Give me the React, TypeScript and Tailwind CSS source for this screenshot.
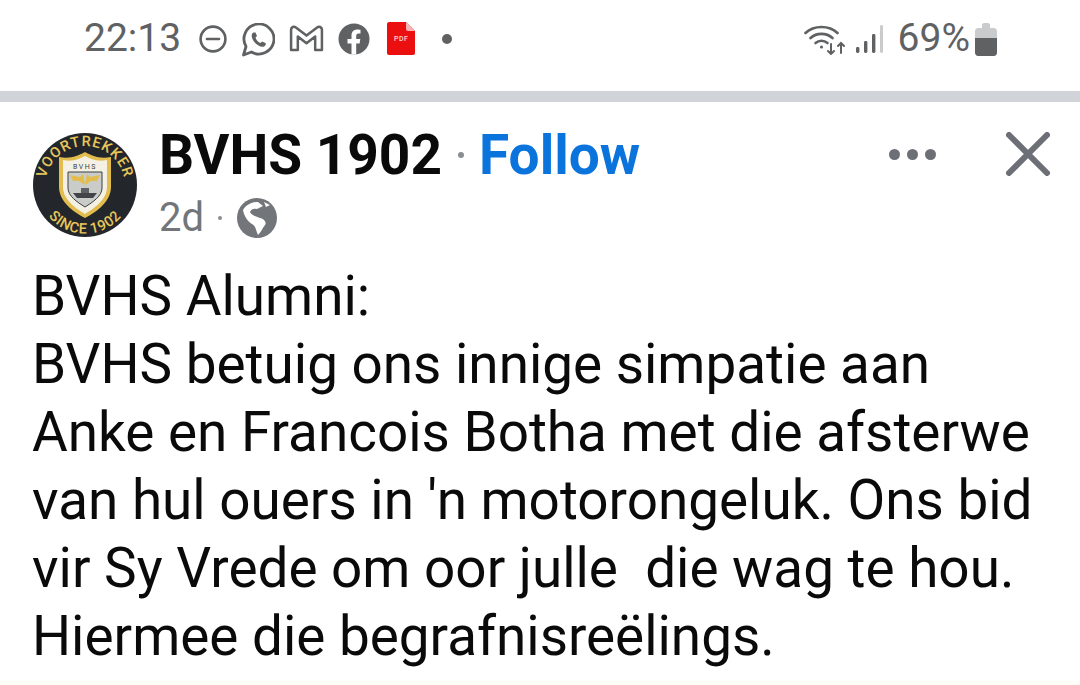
import React from 'react';

function Logo() {
  return (
    <svg viewBox="0 0 104 104" className="w-[104px] h-[104px] shrink-0">
      <defs>
        <path id="arcTop" d="M 13 62 A 40 40 0 1 1 91 62" />
        <path id="arcBottom" d="M 5 60 A 47.5 47.5 0 0 0 99 60" />
      </defs>
      <circle cx="52" cy="52" r="52" fill="#23262a" />
      <text fontFamily="Roboto, sans-serif" fontSize="14.5" fontWeight="500" fill="#e8c65a" letterSpacing="0.9">
        <textPath href="#arcTop" startOffset="50%" textAnchor="middle">VOORTREKKER</textPath>
      </text>
      <text fontFamily="Roboto, sans-serif" fontSize="14.5" fontWeight="500" fill="#e8c65a" letterSpacing="0.6">
        <textPath href="#arcBottom" startOffset="50%" textAnchor="middle">SINCE 1902</textPath>
      </text>
      <path d="M26 24 C38 26 44 23 52 19 C60 23 66 26 78 24 L78 54 C78 68 64 79 52 85 C40 79 26 68 26 54 Z" fill="#e2bd4e" />
      <path d="M30 27 C40 29 46 26 52 23 C58 26 64 29 74 27 L74 54 C74 66 62 75 52 81 C42 75 30 66 30 54 Z" fill="#f4f1e4" />
      <path d="M35 39 L69 39 L69 55 C69 63 60 69 52 74 C44 69 35 63 35 55 Z" fill="#c9ccc9" stroke="#3b3f44" strokeWidth="1" />
      <path d="M37 42 L47 44 L50 41 L52 52 L46 48 L40 48 Z" fill="#e2bd4e" />
      <path d="M67 42 L57 44 L54 41 L52 52 L58 48 L64 48 Z" fill="#e2bd4e" />
      <path d="M40 60 L64 60 L60 65 L44 65 Z" fill="#41454a" />
      <rect x="48" y="55" width="8" height="5" fill="#5d6166" />
      <text x="52" y="36" textAnchor="middle" fontFamily="Roboto, sans-serif" fontSize="7" fill="#3b3f44" letterSpacing="1.5">BVHS</text>
    </svg>
  );
}

function StatusIcons() {
  return (
    <div className="flex items-center">
      {/* dnd */}
      <svg viewBox="0 0 28 28" className="w-[28px] h-[28px] ml-[18px]" fill="none" stroke="#5f6163" strokeWidth="2.6">
        <circle cx="14" cy="14" r="12.4" />
        <path d="M8 14 H20" strokeLinecap="round" />
      </svg>
      {/* whatsapp */}
      <svg viewBox="0 0 34 34" className="w-[34px] h-[34px] ml-[14px] mt-[2px]" fill="none" stroke="#5f6163" strokeWidth="2.8">
        <path d="M2.5 32 L5 23.5 A15 15 0 1 1 10.5 29 Z" strokeLinejoin="round" />
        <path d="M12.5 9.5 C10 11 10 14 13 18.5 C16 22.5 20 24.5 23 23.5 C25 22.5 25 20.5 24.5 20 L21 18.5 L19.5 20 C17.5 19.5 15 17 14.5 14.5 L16 13 L14.5 9.5 Z" fill="#5f6163" stroke="none" />
      </svg>
      {/* gmail */}
      <svg viewBox="0 0 36 28" className="w-[35px] h-[27px] ml-[14px]" fill="none" stroke="#5f6163" strokeWidth="2.6" strokeLinejoin="round">
        <path d="M2 5 C2 2 5 1 7 2.5 L18 11 L29 2.5 C31 1 34 2 34 5 V26 H27 V12 L18 19 L9 12 V26 H2 Z" />
      </svg>
      {/* facebook */}
      <svg viewBox="0 0 32 32" className="w-[32px] h-[32px] ml-[14px]">
        <circle cx="16" cy="16" r="15.5" fill="#5f6163" />
        <path d="M13.5 31.5 V20.5 H9.5 V16 H13.5 V12.5 C13.5 8.5 16 6.5 19.5 6.5 C21 6.5 22.5 6.8 22.5 6.8 V10.6 H20.6 C18.8 10.6 18.2 11.7 18.2 12.9 V16 H22.3 L21.6 20.5 H18.2 V31.5 Z" fill="#fff" />
      </svg>
      {/* pdf file */}
      <div className="relative ml-[17px] w-[28px] h-[33px]">
        <svg viewBox="0 0 28 33" className="w-[28px] h-[33px]">
          <path d="M2 0 H19 L28 9 V31 C28 32 27 33 26 33 H2 C1 33 0 32 0 31 V2 C0 1 1 0 2 0 Z" fill="#ec0f0f" />
          <path d="M19 0 L28 9 H21 C20 9 19 8 19 7 Z" fill="#f7b4b4" />
        </svg>
        <span className="absolute left-0 right-0 top-[13px] text-center text-[7px] leading-[8px] font-medium text-[#ffd9d9] tracking-[0.5px]">PDF</span>
      </div>
      <div className="ml-[27px] w-[10px] h-[10px] rounded-full bg-[#5f6163]" />
    </div>
  );
}

function RightStatus() {
  return (
    <div className="flex items-center">
      <svg viewBox="0 0 42 32" className="w-[42px] h-[32px]" fill="none" stroke="#5f6163" strokeWidth="2.6" strokeLinecap="round">
        <path d="M1.5 10 C10 2 25 2 33.5 10" />
        <path d="M6.5 15 C12.5 9.5 22.5 9.5 28.5 15" />
        <path d="M11.5 20 C15 17 20 17 23.5 20" />
        <circle cx="17.5" cy="24" r="1.6" fill="#5f6163" stroke="none" />
        <path d="M27 21 V31 M24 28 L27 31 L30 28" strokeWidth="2" />
        <path d="M37 30 V20 M34 23 L37 20 L40 23" strokeWidth="2" />
      </svg>
      <svg viewBox="0 0 28 30" className="w-[28px] h-[30px] ml-[9px]">
        <rect x="1" y="23" width="3.4" height="6" rx="1.4" fill="#5f6163" />
        <rect x="9" y="17" width="3.4" height="12" rx="1.4" fill="#5f6163" />
        <rect x="17" y="10" width="3.4" height="19" rx="1.4" fill="#5f6163" />
        <rect x="25" y="1" width="3" height="28" rx="1.4" fill="#c9cbcd" />
      </svg>
      <span className="ml-[15px] text-[39px] leading-none text-[#5f6163]">69%</span>
      <svg viewBox="0 0 22 33" className="w-[22px] h-[33px] ml-[5px] mt-[2px]">
        <path d="M7 2 C7 1 8 0 9 0 H13 C14 0 15 1 15 2 V5 H19 C20.5 5 22 6.5 22 8 V17 H0 V8 C0 6.5 1.5 5 3 5 H7 Z" fill="#c9cbcd" />
        <path d="M0 15 H22 V30 C22 31.5 20.5 33 19 33 H3 C1.5 33 0 31.5 0 30 Z" fill="#5f6163" />
      </svg>
    </div>
  );
}

export default function App() {
  const lines = [
    'BVHS Alumni:',
    'BVHS betuig ons innige simpatie aan',
    'Anke en Francois Botha met die afsterwe',
    "van hul ouers in 'n motorongeluk. Ons bid",
    'vir Sy Vrede om oor julle  die wag te hou.',
    'Hiermee die begrafnisreëlings.',
  ];

  return (
    <div className="w-[1080px] h-[685px] overflow-hidden bg-white flex flex-col font-['Roboto',sans-serif]">
      <div className="h-[91px] flex items-center justify-between pl-[84px] pr-[83px] pb-[14px]">
        <div className="flex items-center">
          <span className="text-[39px] leading-none text-[#5f6163]">22:13</span>
          <StatusIcons />
        </div>
        <RightStatus />
      </div>
      <div className="h-[11px] bg-[#d0d4d9]" />

      <div className="flex items-start pl-[33px] pr-[30px] pt-[31px]">
        <Logo />
        <div className="ml-[22px] flex-1 -mt-[7px]">
          <div className="flex items-center h-[58px]">
            <span className="text-[55px] leading-[58px] font-bold text-[#0a0a0a]">BVHS 1902</span>
            <div className="ml-[16px] w-[6px] h-[6px] rounded-full bg-[#8a8d91]" />
            <span className="ml-[15px] text-[55px] leading-[58px] font-bold text-[#0a74dc]">Follow</span>
          </div>
          <div className="flex items-center mt-[12px]">
            <span className="text-[40px] leading-[44px] text-[#72767b]">2d</span>
            <div className="ml-[14px] w-[4px] h-[4px] rounded-full bg-[#8a8d91]" />
            <svg viewBox="0 0 40 40" className="w-[40px] h-[40px] ml-[15px]">
              <circle cx="20" cy="20" r="20" fill="#72767b" />
              <path d="M6 12 C9 7 15 4 21 4 L26 8 L20 11 C17 10 14 11 13 14 C15 18 19 18 23 20 C27 21 30 24 28 27 C25 31 24 34 21 37 C19 33 19 28 15 26 C11 24 7 18 6 12 Z" fill="#fff" />
              <path d="M27 4 L33 7 L29 9 Z" fill="#fff" />
            </svg>
          </div>
        </div>
        <div className="flex items-center -mt-[1px]">
          <div className="flex items-center gap-[7px]">
            <div className="w-[11px] h-[11px] rounded-full bg-[#6c6f75]" />
            <div className="w-[11px] h-[11px] rounded-full bg-[#6c6f75]" />
            <div className="w-[11px] h-[11px] rounded-full bg-[#6c6f75]" />
          </div>
          <svg viewBox="0 0 44 44" className="w-[44px] h-[44px] ml-[70px]" fill="none" stroke="#6c6f75" strokeWidth="6" strokeLinecap="round">
            <path d="M3 3 L41 41 M41 3 L3 41" />
          </svg>
        </div>
      </div>

      <div className="pl-[32px] pt-[22px] text-[54.85px] leading-[68px] text-[#0a0a0a] whitespace-pre">
        {lines.map((line) => (
          <div key={line}>{line}</div>
        ))}
      </div>
      <div className="mt-auto h-[4px] shrink-0 bg-[#fdfdf6]" />
    </div>
  );
}
